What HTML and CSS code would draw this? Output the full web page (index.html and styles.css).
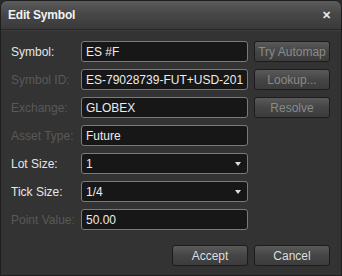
FILE: index.html
```html
<!DOCTYPE html>
<html lang="en">
<head>
    <meta charset="UTF-8">
    <title>Edit Symbol</title>
    <link rel="stylesheet" href="styles.css">
</head>
<body>
    <div class="dialog">
        <div class="titlebar">
            <span class="title">Edit Symbol</span>
            <span class="close">&#x2715;</span>
        </div>
        <div class="form">
            <label class="lbl">Symbol:</label>
            <div class="field">ES #F</div>
            <button class="btn disabled">Try Automap</button>

            <label class="lbl dim">Symbol ID:</label>
            <div class="field">ES-79028739-FUT+USD-201</div>
            <button class="btn disabled">Lookup...</button>

            <label class="lbl dim">Exchange:</label>
            <div class="field">GLOBEX</div>
            <button class="btn disabled">Resolve</button>

            <label class="lbl dim">Asset Type:</label>
            <div class="field">Future</div>
            <span></span>

            <label class="lbl">Lot Size:</label>
            <div class="field select">1<span class="caret"></span></div>
            <span></span>

            <label class="lbl">Tick Size:</label>
            <div class="field select">1/4<span class="caret"></span></div>
            <span></span>

            <label class="lbl dim">Point Value:</label>
            <div class="field">50.00</div>
            <span></span>
        </div>
        <div class="actions">
            <button class="btn">Accept</button>
            <button class="btn">Cancel</button>
        </div>
    </div>
</body>
</html>
```

FILE: styles.css
```css
body {
    margin: 0;
    background: #2a2a2a;
    font-family: "Liberation Sans", Arial, sans-serif;
}
.dialog {
    width: 342px;
    height: 276px;
    box-sizing: border-box;
    background: #333333;
    border: 1px solid #1f1f1f;
    border-radius: 7px 7px 0 0;
    overflow: hidden;
}
.titlebar {
    height: 28px;
    display: flex;
    align-items: center;
    justify-content: space-between;
    padding: 0 10px 0 7px;
    background: linear-gradient(#5c5c5c, #474747 45%, #3a3a3a);
    border-bottom: 1px solid #262626;
    box-shadow: 0 1px 0 #3d3d3d;
}
.title {
    color: #f2f2f2;
    font-weight: bold;
    font-size: 12px;
    letter-spacing: -0.2px;
}
.close {
    color: #e8e8e8;
    font-size: 11px;
    font-weight: bold;
}
.form {
    display: grid;
    grid-template-columns: 64px 167px 76px;
    grid-auto-rows: 21px;
    column-gap: 6px;
    row-gap: 7px;
    padding: 11px 0 0 10px;
}
.lbl {
    color: #e6e6e6;
    font-size: 12px;
    display: flex;
    align-items: center;
    white-space: nowrap;
}
.lbl.dim {
    color: #595959;
}
.field {
    position: relative;
    box-sizing: border-box;
    background: #171717;
    border: 1px solid #7a7a7a;
    border-radius: 3px;
    color: #ededed;
    font-size: 12px;
    padding: 0 4px;
    display: flex;
    align-items: center;
    white-space: nowrap;
    overflow: hidden;
}
.caret {
    position: absolute;
    right: 6px;
    top: 8px;
    border-left: 3px solid transparent;
    border-right: 3px solid transparent;
    border-top: 4px solid #e0e0e0;
}
.btn {
    box-sizing: border-box;
    height: 21px;
    width: 76px;
    padding: 0;
    background: linear-gradient(#5a5a5a, #454545 50%, #3c3c3c);
    border: 1px solid #1c1c1c;
    border-radius: 3px;
    color: #dedede;
    font-family: "Liberation Sans", Arial, sans-serif;
    font-size: 12px;
}
.btn.disabled {
    color: #8a8a8a;
}
.actions {
    display: flex;
    justify-content: flex-end;
    gap: 6px;
    padding: 15px 11px 0 0;
}
```
